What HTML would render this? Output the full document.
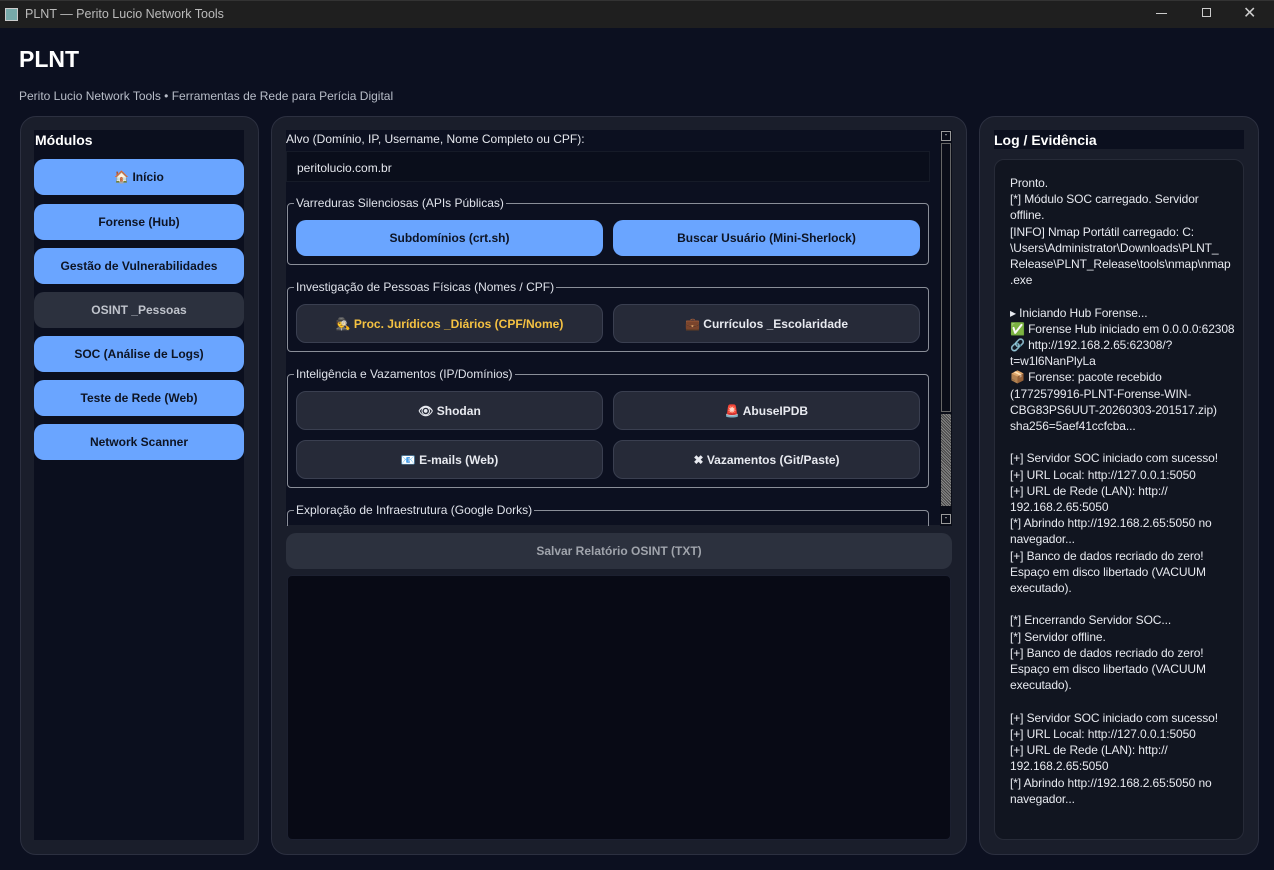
<!DOCTYPE html>
<html><head><meta charset="utf-8"><style>
*{box-sizing:border-box;margin:0;padding:0}
body{width:1274px;height:870px;background:#0c1020;font-family:"Liberation Sans","Noto Sans CJK SC",sans-serif;color:#e6e8ee;position:relative;overflow:hidden}
.a{position:absolute}
.tb{left:0;top:0;width:1274px;height:28px;background:#1f1f1f;border-top:1px solid #333}
.panel{background:#1a1e2b;border:1px solid #2c3040;border-radius:16px}
.btn{position:absolute;border-radius:10px;font-size:12px;font-weight:bold;display:flex;align-items:center;justify-content:center}
.blue{background:#6aa5ff;color:#0d1424}
.dark{background:#262a38;color:#e8eaf0;border:1px solid #3a3f50}
.grp{position:absolute;left:287px;width:642px;border:1px solid #8a8e98;border-radius:4px}
.gl{position:absolute;left:6px;top:-8px;background:#0c1020;font-size:12px;color:#dfe2ea;padding:0 2px}
.log{font-size:12px;line-height:16.2px;color:#e8eaf0;white-space:pre;letter-spacing:-0.1px}
</style></head><body>
<div class="a tb">
 <div class="a" style="left:5px;top:7px;width:13px;height:13px;background:#7aa;border:1px solid #ccc"></div>
 <div class="a" style="left:25px;top:6px;font-size:12.5px;color:#bbb">PLNT — Perito Lucio Network Tools</div>
 <div class="a" style="left:1156px;top:12px;width:11px;height:1px;background:#ccc"></div>
 <div class="a" style="left:1202px;top:7px;width:9px;height:9px;border:1px solid #ccc"></div>
 <div class="a" style="left:1243px;top:2px;font-size:16px;color:#ccc">✕</div>
</div>
<div class="a" style="left:19px;top:46px;font-size:23px;font-weight:bold;color:#fff">PLNT</div>
<div class="a" style="left:19px;top:89px;font-size:12px;color:#b8bdc8">Perito Lucio Network Tools • Ferramentas de Rede para Perícia Digital</div>

<div class="a panel" style="left:20px;top:116px;width:239px;height:739px"></div>
<div class="a" style="left:34px;top:130px;width:210px;height:710px;background:#0b0f1e"></div>
<div class="a" style="left:35px;top:132px;font-size:14px;font-weight:bold;color:#fff">Módulos</div>
<div class="btn blue" style="left:34px;top:159px;width:210px;height:36px">🏠 Início</div>
<div class="btn blue" style="left:34px;top:204px;width:210px;height:36px">Forense (Hub)</div>
<div class="btn blue" style="left:34px;top:248px;width:210px;height:36px">Gestão de Vulnerabilidades</div>
<div class="btn" style="left:34px;top:292px;width:210px;height:36px;background:#2c313e;color:#c0c4cc">OSINT _Pessoas</div>
<div class="btn blue" style="left:34px;top:336px;width:210px;height:36px">SOC (Análise de Logs)</div>
<div class="btn blue" style="left:34px;top:380px;width:210px;height:36px">Teste de Rede (Web)</div>
<div class="btn blue" style="left:34px;top:424px;width:210px;height:36px">Network Scanner</div>

<div class="a panel" style="left:271px;top:116px;width:696px;height:739px"></div>
<div class="a" style="left:286px;top:130px;width:666px;height:395px;background:#0c1020"></div>
<div class="a" style="left:286px;top:132px;font-size:12px">Alvo (Domínio, IP, Username, Nome Completo ou CPF):</div>
<div class="a" style="left:286px;top:151px;width:644px;height:31px;background:#0a0e1b;border:1px solid #161b28;font-size:12px;padding:9px 10px">peritolucio.com.br</div>

<div class="grp" style="top:203px;height:62px"><div class="gl">Varreduras Silenciosas (APIs Públicas)</div></div>
<div class="btn blue" style="left:296px;top:220px;width:307px;height:36px">Subdomínios (crt.sh)</div>
<div class="btn blue" style="left:613px;top:220px;width:307px;height:36px">Buscar Usuário (Mini-Sherlock)</div>

<div class="grp" style="top:287px;height:65px"><div class="gl">Investigação de Pessoas Físicas (Nomes / CPF)</div></div>
<div class="btn dark" style="left:296px;top:304px;width:307px;height:39px;color:#f5c242">🕵 Proc. Jurídicos _Diários (CPF/Nome)</div>
<div class="btn dark" style="left:613px;top:304px;width:307px;height:39px">💼 Currículos _Escolaridade</div>

<div class="grp" style="top:374px;height:114px"><div class="gl">Inteligência e Vazamentos (IP/Domínios)</div></div>
<div class="btn dark" style="left:296px;top:391px;width:307px;height:39px">👁 Shodan</div>
<div class="btn dark" style="left:613px;top:391px;width:307px;height:39px">🚨 AbuseIPDB</div>
<div class="btn dark" style="left:296px;top:440px;width:307px;height:39px">📧 E-mails (Web)</div>
<div class="btn dark" style="left:613px;top:440px;width:307px;height:39px">✖ Vazamentos (Git/Paste)</div>

<div class="grp" style="top:510px;height:16px;border-bottom:none;border-radius:4px 4px 0 0"><div class="gl">Exploração de Infraestrutura (Google Dorks)</div></div>

<div class="a" style="left:940px;top:130px;width:12px;height:396px;background:#0a0d18"></div>
<div class="a" style="left:941px;top:131px;width:10px;height:10px;border:1px solid #999;font-size:8px;color:#ddd;text-align:center;line-height:6px">-</div>
<div class="a" style="left:941px;top:143px;width:10px;height:269px;border:1px solid #666"></div>
<div class="a" style="left:941px;top:414px;width:10px;height:92px;background:repeating-linear-gradient(45deg,#888 0 1px,#444 1px 2px)"></div>
<div class="a" style="left:941px;top:514px;width:10px;height:10px;border:1px solid #999;font-size:8px;color:#ddd;text-align:center;line-height:6px">-</div>

<div class="btn" style="left:286px;top:533px;width:666px;height:36px;background:#2c313e;color:#a0a4ac">Salvar Relatório OSINT (TXT)</div>
<div class="a" style="left:287px;top:575px;width:664px;height:265px;background:#080a15;border:1px solid #1c2030;border-radius:5px"></div>

<div class="a panel" style="left:979px;top:116px;width:280px;height:739px"></div>
<div class="a" style="left:994px;top:130px;width:250px;height:19px;background:#0b0f1e"></div>
<div class="a" style="left:994px;top:132px;font-size:14px;font-weight:bold;color:#fff">Log / Evidência</div>
<div class="a" style="left:994px;top:159px;width:250px;height:681px;background:#111520;border:1px solid #272b38;border-radius:10px"></div>
<div class="a log" style="left:1010px;top:175px">Pronto.
[*] Módulo SOC carregado. Servidor
offline.
[INFO] Nmap Portátil carregado: C:
\Users\Administrator\Downloads\PLNT_
Release\PLNT_Release\tools\nmap\nmap
.exe

▸ Iniciando Hub Forense...
✅ Forense Hub iniciado em 0.0.0.0:62308
🔗 http://192.168.2.65:62308/?
t=w1l6NanPlyLa
📦 Forense: pacote recebido
(1772579916-PLNT-Forense-WIN-
CBG83PS6UUT-20260303-201517.zip)
sha256=5aef41ccfcba...

[+] Servidor SOC iniciado com sucesso!
[+] URL Local: http://127.0.0.1:5050
[+] URL de Rede (LAN): http://
192.168.2.65:5050
[*] Abrindo http://192.168.2.65:5050 no
navegador...
[+] Banco de dados recriado do zero!
Espaço em disco libertado (VACUUM
executado).

[*] Encerrando Servidor SOC...
[*] Servidor offline.
[+] Banco de dados recriado do zero!
Espaço em disco libertado (VACUUM
executado).

[+] Servidor SOC iniciado com sucesso!
[+] URL Local: http://127.0.0.1:5050
[+] URL de Rede (LAN): http://
192.168.2.65:5050
[*] Abrindo http://192.168.2.65:5050 no
navegador...</div>
</body></html>
